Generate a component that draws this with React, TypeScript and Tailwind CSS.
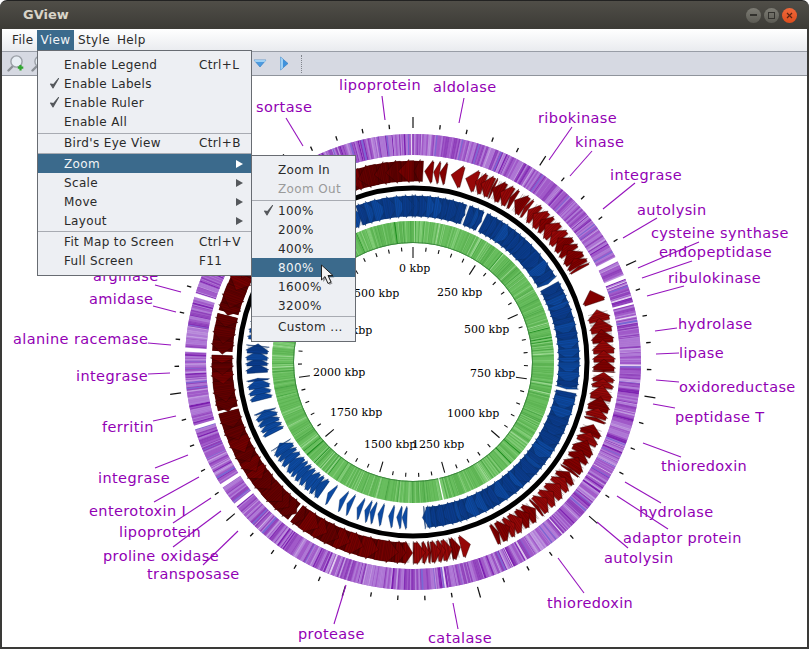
import { Fragment } from 'react';

const CX = 413;
const CY = 362;

function rng(seed: number) {
  let s = seed;
  return () => {
    s = (s + 0x6d2b79f5) | 0;
    let t = Math.imul(s ^ (s >>> 15), 1 | s);
    t = (t + Math.imul(t ^ (t >>> 7), 61 | t)) ^ t;
    return ((t ^ (t >>> 14)) >>> 0) / 4294967296;
  };
}

function pt(r: number, deg: number) {
  const a = (deg * Math.PI) / 180;
  return `${(CX + r * Math.sin(a)).toFixed(2)} ${(CY - r * Math.cos(a)).toFixed(2)}`;
}

function wedge(r0: number, r1: number, a0: number, a1: number) {
  const large = a1 - a0 > 180 ? 1 : 0;
  return `M${pt(r0, a0)}L${pt(r1, a0)}A${r1} ${r1} 0 ${large} 1 ${pt(r1, a1)}L${pt(r0, a1)}A${r0} ${r0} 0 ${large} 0 ${pt(r0, a0)}Z`;
}

function pick(r: () => number, colors: [string, number][]) {
  let v = r();
  for (const [c, w] of colors) {
    v -= w;
    if (v <= 0) return c;
  }
  return colors[0][0];
}

const PURPLE_GAPS: [number, number][] = [
  [62.6, 63.8], [67.6, 68.6], [74.8, 75.3], [230.6, 231.6], [236.6, 237.6], [252.8, 253.8], [272.6, 273.6], [286.6, 287.6],
];

function PurpleRing() {
  const r = rng(11);
  const stripes: { d: string; c: string; o: number }[] = [];
  let a = 0;
  while (a < 360) {
    const w = 0.12 + r() * 0.4;
    const c = pick(r, [
      ['#b27fd8', 0.3], ['#a058c8', 0.27], ['#8c3cb8', 0.18], ['#c4a0e2', 0.12], ['#7a1cae', 0.07],
      ['#7468d4', 0.045], ['#eee4f6', 0.015], ['#4a2bb8', 0.01],
    ]);
    stripes.push({ d: wedge(207, 228, a, a + w), c, o: 0.7 + r() * 0.3 });
    a += w;
  }
  return (
    <g>
      <circle cx={CX} cy={CY} r={217.5} fill="none" stroke="#a563cc" strokeWidth={21} />
      {stripes.map((s, i) => (
        <path key={i} d={s.d} fill={s.c} opacity={s.o} />
      ))}
      {PURPLE_GAPS.map(([g0, g1], i) => (
        <path key={i} d={wedge(204, 231, g0, g1)} fill="#fff" />
      ))}
    </g>
  );
}

function GreenRing() {
  const r = rng(23);
  const stripes: { d: string; c: string; o: number }[] = [];
  let a = 0;
  while (a < 360) {
    const w = 0.15 + r() * 0.45;
    const c = pick(r, [
      ['#6abf60', 0.36], ['#5cb352', 0.28], ['#86cf7c', 0.22], ['#4aa545', 0.08], ['#a3dc9a', 0.04], ['#17891a', 0.02],
    ]);
    stripes.push({ d: wedge(119, 141, a, a + w), c, o: 0.7 + r() * 0.3 });
    a += w;
  }
  return (
    <g>
      <circle cx={CX} cy={CY} r={130} fill="none" stroke="#66ba5c" strokeWidth={22} />
      {stripes.map((s, i) => (
        <path key={i} d={s.d} fill={s.c} opacity={s.o} />
      ))}
      <circle cx={CX} cy={CY} r={119.5} fill="none" stroke="#2f7a34" strokeWidth={1} opacity={0.8} />
      <path d={wedge(117, 143, 167.3, 167.8)} fill="#fff" />
    </g>
  );
}

type Gene = { a0: number; a1: number; over?: number };

// splits a range into genes of random length, heads lap over the next gene a bit
function split(ranges: [number, number][], seed: number, min: number, max: number) {
  const r = rng(seed);
  const out: Gene[] = [];
  for (const [s, e] of ranges) {
    let a = s;
    while (a < e) {
      const l = Math.min(min + r() * (max - min), e - a);
      out.push({ a0: a, a1: a + l, over: a + l >= e ? 0 : 0.9 });
      a += l;
    }
  }
  return out;
}

function arrow(g: Gene, r0: number, r1: number, dir: number) {
  const len = g.a1 - g.a0;
  const head = g.over === undefined ? len * 0.85 : Math.min(len * 0.65, 2.4);
  const mid = (r0 + r1) / 2;
  const over = g.over ?? 0;
  const back = dir > 0 ? g.a0 : g.a1;
  const neck = dir > 0 ? g.a1 - head : g.a0 + head;
  const tip = dir > 0 ? g.a1 + over : g.a0 - over;
  const steps = Math.max(1, Math.ceil(Math.abs(neck - back) / 1.5));
  const outer: string[] = [];
  const inner: string[] = [];
  for (let i = 0; i <= steps; i++) {
    const a = back + ((neck - back) * i) / steps;
    outer.push(pt(r1 - 0.8, a));
    inner.unshift(pt(r0 + 0.8, a));
  }
  return `M${outer.join('L')}L${pt(r1 + 0.6, neck)}L${pt(mid, tip)}L${pt(r0 - 0.6, neck)}L${inner.join('L')}Z`;
}

function GeneRing({ genes, solid, r0, r1, dir, fill, line, seed }: { genes: Gene[]; solid: [number, number, string][]; r0: number; r1: number; dir: number; fill: (a: number, v: number) => string; line: string; seed: number }) {
  const r = rng(seed);
  return (
    <g>
      {solid.map(([a0, a1, c], i) => (
        <path key={i} d={wedge(r0 + 0.8, r1 - 0.8, a0, a1)} fill={c} />
      ))}
      {genes.map((g, i) => {
        const hatch: string[] = [];
        if (g.over !== undefined) {
          for (let a = g.a0 + 0.2; a < g.a1 - 0.2; a += 0.3 + r() * 0.5) {
            hatch.push(`M${pt(r0 + 1, a)}L${pt(r1 - 1, a)}`);
          }
        }
        return (
          <Fragment key={i}>
            <path d={arrow(g, r0, r1, dir)} fill={fill(g.a0, r())} stroke={line} strokeWidth={0.4} />
            <path d={hatch.join('')} stroke={line} strokeWidth={0.5} opacity={0.55} fill="none" />
          </Fragment>
        );
      })}
    </g>
  );
}

const RED_GENES: Gene[] = [
  { a0: 162.5, a1: 165.5 },
  ...split([[166.5, 168.5], [169, 175.5], [176, 180]], 6, 1.2, 2.6),
  ...split([[181, 217.5], [218.4, 255], [255.8, 272], [273.2, 284], [285, 363]], 7, 2, 6),
  { a0: 3.5, a1: 6 }, { a0: 6.2, a1: 8 }, { a0: 8, a1: 10 }, { a0: 11.5, a1: 15 }, { a0: 16, a1: 19.5 },
  ...split([[20, 25], [25.5, 32], [33, 37]], 8, 1.6, 3),
  ...split([[38, 61]], 9, 1.6, 3.2),
  { a0: 68, a1: 72 },
  ...split([[75, 93], [94, 108], [110, 125], [126, 140], [141, 155]], 10, 1.8, 3.6),
];

const BLUE_GENES: Gene[] = [
  ...split([[0, 19.5], [20, 26], [26.6, 60], [61, 100], [101, 176]], 15, 1.5, 4.5),
  ...[184, 186, 189, 193, 196, 198, 201, 205, 208, 213].map((a) => ({ a0: a - 1.8, a1: a })),
  ...split([[215, 238], [243, 252], [256, 264], [266, 276], [278, 290]], 16, 1.6, 3),
  ...split([[300, 360]], 17, 2, 5),
];

const TICK_TEXT: [string, number, number][] = [
  ['0 kbp', 399, 272], ['250 kbp', 437, 296], ['500 kbp', 464, 333], ['750 kbp', 470, 377], ['1000 kbp', 447, 417],
  ['1250 kbp', 412, 448], ['1500 kbp', 364, 448], ['1750 kbp', 330, 416], ['2000 kbp', 313, 376], ['2250 kbp', 320, 334], ['2500 kbp', 347, 297],
];

const LABELS: { t: string; x: number; y: number; l: [number, number, number, number] }[] = [
  { t: 'sortase', x: 256, y: 112, l: [286, 118, 303, 146] },
  { t: 'lipoprotein', x: 339, y: 90, l: [382, 96, 385, 120] },
  { t: 'aldolase', x: 433, y: 92, l: [464, 98, 459, 123] },
  { t: 'ribokinase', x: 538, y: 123, l: [572, 127, 549, 160] },
  { t: 'kinase', x: 575, y: 147, l: [592, 151, 570, 176] },
  { t: 'integrase', x: 610, y: 180, l: [635, 183, 603, 209] },
  { t: 'autolysin', x: 637, y: 215, l: [657, 218, 623, 238] },
  { t: 'cysteine synthase', x: 651, y: 238, l: [699, 242, 638, 268] },
  { t: 'endopeptidase', x: 659, y: 257, l: [692, 261, 642, 278] },
  { t: 'ribulokinase', x: 668, y: 283, l: [684, 286, 647, 296] },
  { t: 'hydrolase', x: 678, y: 329, l: [677, 328, 655, 331] },
  { t: 'lipase', x: 679, y: 358, l: [679, 353, 656, 354] },
  { t: 'oxidoreductase', x: 679, y: 392, l: [679, 382, 656, 380] },
  { t: 'peptidase T', x: 675, y: 422, l: [675, 408, 653, 404] },
  { t: 'thioredoxin', x: 661, y: 471, l: [681, 457, 643, 443] },
  { t: 'hydrolase', x: 639, y: 517, l: [661, 503, 625, 482] },
  { t: 'adaptor protein', x: 623, y: 543, l: [668, 529, 617, 496] },
  { t: 'autolysin', x: 604, y: 563, l: [628, 548, 597, 522] },
  { t: 'thioredoxin', x: 547, y: 608, l: [584, 593, 558, 558] },
  { t: 'catalase', x: 428, y: 643, l: [458, 629, 453, 603] },
  { t: 'protease', x: 298, y: 639, l: [334, 624, 346, 585] },
  { t: 'transposase', x: 147, y: 579, l: [203, 565, 238, 531] },
  { t: 'proline oxidase', x: 103, y: 561, l: [173, 547, 221, 511] },
  { t: 'lipoprotein', x: 119, y: 537, l: [173, 523, 211, 498] },
  { t: 'enterotoxin I', x: 89, y: 516, l: [154, 502, 199, 477] },
  { t: 'integrase', x: 98, y: 483, l: [155, 468, 188, 455] },
  { t: 'ferritin', x: 102, y: 432, l: [153, 421, 176, 416] },
  { t: 'integrase', x: 76, y: 381, l: [148, 374, 170, 373] },
  { t: 'alanine racemase', x: 13, y: 344, l: [148, 343, 171, 345] },
  { t: 'amidase', x: 89, y: 304, l: [153, 306, 176, 312] },
  { t: 'arginase', x: 93, y: 281, l: [155, 285, 181, 292] },
];

function Ticks() {
  const ticks = [];
  for (let k = 0; k < 55; k++) {
    const a = k * 6.56;
    const major = k % 5 === 0;
    ticks.push(
      <Fragment key={k}>
        <path d={`M${pt(234, a)}L${pt(major ? 245 : 238.5, a)}`} stroke="#111" strokeWidth={major ? 1.2 : 1.3} />
        <path d={`M${pt(115, a)}L${pt(major ? 104 : 111, a)}`} stroke="#111" strokeWidth={1.1} />
      </Fragment>
    );
  }
  return <g>{ticks}</g>;
}

function GenomeMap() {
  return (
    <svg className="absolute left-0 top-0" width={809} height={649} viewBox="0 0 809 649">
      <Ticks />
      <PurpleRing />
      <GeneRing
        genes={RED_GENES}
        solid={[[182, 217.5, '#5c0000'], [218.4, 255, '#5c0000'], [255.8, 272, '#5c0000'], [273.2, 284, '#5c0000'], [285, 362, '#5c0000']]}
        r0={180}
        r1={202}
        dir={-1}
        seed={31}
        line="#2c0000"
        fill={(a, v) => (a > 181 || a < 3 ? (v > 0.5 ? '#760000' : '#640000') : v > 0.5 ? '#960808' : '#820000')}
      />
      <circle cx={CX} cy={CY} r={174} fill="none" stroke="#000" strokeWidth={5} />
      <GeneRing
        genes={BLUE_GENES}
        solid={[[0, 19, '#0a3a86'], [20.5, 25.5, '#0a3a86'], [27, 59, '#0a3a86'], [62, 99, '#0a3a86'], [102, 175, '#0a3a86'], [340, 360, '#0a3a86']]}
        r0={145}
        r1={167}
        dir={1}
        seed={37}
        line="#0a2a5c"
        fill={(a, v) => (a > 178 && a < 250 ? '#0d4ba3' : v > 0.5 ? '#0d49a2' : '#0a3c8e')}
      />
      <GreenRing />
      {TICK_TEXT.map(([t, x, y]) => (
        <text key={t} x={x} y={y} className="font-['DejaVu_Serif',serif] text-[11px] fill-black">
          {t}
        </text>
      ))}
      {LABELS.map((b, i) => (
        <Fragment key={i}>
          <line x1={b.l[0]} y1={b.l[1]} x2={b.l[2]} y2={b.l[3]} stroke="#9612bd" strokeWidth={1.1} />
          <text x={b.x} y={b.y} className="font-['DejaVu_Sans',sans-serif] text-[14.5px] tracking-[0.4px] fill-[#9200b4]">
            {b.t}
          </text>
        </Fragment>
      ))}
    </svg>
  );
}

function Check() {
  return (
    <svg width="11" height="12" viewBox="0 0 11 12" className="absolute left-[11px] top-[3px]">
      <path d="M1.5 7 L4 11 L9.5 1.5 L4.5 7.6 Z" fill="#55585c" stroke="#55585c" strokeWidth="1.1" strokeLinejoin="round" />
    </svg>
  );
}

type Item = { label: string; key?: string; checked?: boolean; arrow?: boolean; active?: boolean; disabled?: boolean };

function MenuRow({ item }: { item: Item }) {
  const tone = item.active ? 'bg-[#3b6a8c] text-[#f2f4f6]' : item.disabled ? 'text-[#9a9a9a]' : 'text-[#2a2a2a]';
  return (
    <div className={`relative flex h-[19px] items-center whitespace-nowrap pl-[26px] ${tone}`}>
      {item.checked && <Check />}
      <span>{item.label}</span>
      {item.key && <span className="absolute left-[161px]">{item.key}</span>}
      {item.arrow && <span className={`absolute left-[198px] h-0 w-0 border-y-[4.5px] border-l-[7px] border-y-transparent ${item.active ? 'border-l-white' : 'border-l-[#55585c]'}`} />}
    </div>
  );
}

function Sep({ top = 'mt-px' }: { top?: string }) {
  return <div className={`h-px bg-[#a8abb2] ${top}`} />;
}

function ViewMenu() {
  return (
    <div className="absolute left-[37px] top-[50px] w-[215px] border border-[#686c72] bg-[#edeff3] pb-[5px] pt-[4px] text-[12px] tracking-[0.35px]">
      {[{ label: 'Enable Legend', key: 'Ctrl+L' }, { label: 'Enable Labels', checked: true }, { label: 'Enable Ruler', checked: true }, { label: 'Enable All' }].map((i) => (
        <MenuRow key={i.label} item={i} />
      ))}
      <Sep top="mt-[2px] mb-[-1px]" />
      <MenuRow item={{ label: "Bird's Eye View", key: 'Ctrl+B' }} />
      <Sep />
      {[{ label: 'Zoom', arrow: true, active: true }, { label: 'Scale', arrow: true }, { label: 'Move', arrow: true }, { label: 'Layout', arrow: true }].map((i) => (
        <MenuRow key={i.label} item={i} />
      ))}
      <Sep />
      <MenuRow item={{ label: 'Fit Map to Screen', key: 'Ctrl+V' }} />
      <MenuRow item={{ label: 'Full Screen', key: 'F11' }} />
    </div>
  );
}

function ZoomMenu() {
  return (
    <div className="absolute left-[251px] top-[155px] w-[105px] border border-[#686c72] bg-[#edeff3] pb-[5px] pt-[4px] text-[12px] tracking-[0.35px]">
      <MenuRow item={{ label: 'Zoom In' }} />
      <MenuRow item={{ label: 'Zoom Out', disabled: true }} />
      <Sep top="mt-[2px]" />
      {[{ label: '100%', checked: true }, { label: '200%' }, { label: '400%' }, { label: '800%', active: true }, { label: '1600%' }, { label: '3200%' }].map((i) => (
        <MenuRow key={i.label} item={i} />
      ))}
      <Sep />
      <MenuRow item={{ label: 'Custom ...' }} />
    </div>
  );
}

function Magnifier({ plus }: { plus?: boolean }) {
  return (
    <svg width="18" height="19" viewBox="0 0 18 19">
      <path d="M6.5 11.5 L1.5 16.5" stroke="#8b9096" strokeWidth="2.4" strokeLinecap="round" />
      <circle cx="9.5" cy="7.5" r="5.6" fill="#e8eef4" stroke="#9a9fa6" strokeWidth="1.4" />
      {plus && <path d="M13.5 11v5.5M10.8 13.7h5.5" stroke="#2fa52f" strokeWidth="2.2" />}
    </svg>
  );
}

function Cursor() {
  return (
    <svg className="absolute left-[320px] top-[264px]" width="18" height="24" viewBox="0 0 18 24">
      <path d="M3 3 L3 18 L6.5 14.5 L9.5 21 L12.5 19.5 L9.5 13.5 L14.5 13.5 Z" fill="#000" opacity="0.35" />
      <path d="M1.5 1 L1.5 16 L5 12.6 L8 19.5 L11 18 L8 11.5 L13 11.5 Z" fill="#f4f4f4" stroke="#222" strokeWidth="1" strokeLinejoin="round" />
    </svg>
  );
}

function WinButton({ children, close }: { children: React.ReactNode; close?: boolean }) {
  return (
    <span className={`flex h-[15px] w-[15px] items-center justify-center rounded-full ${close ? 'bg-gradient-to-b from-[#f0683a] to-[#dd4d1c]' : 'bg-gradient-to-b from-[#7d7c74] to-[#5c5b54]'}`}>
      {children}
    </span>
  );
}

export default function App() {
  return (
    <div className="relative flex h-[649px] w-[809px] flex-col overflow-hidden bg-white font-['DejaVu_Sans',sans-serif]">
      <div className="flex h-[29px] items-center justify-between rounded-t-[7px] border-t border-[#222] bg-gradient-to-b from-[#504e48] to-[#3c3b36] pl-[23px] pr-[12px]">
        <span className="text-[13px] font-bold text-[#d8d4c8]">GView</span>
        <div className="flex gap-[3px]">
          <WinButton><span className="h-[1.5px] w-[7px] bg-[#33322e]" /></WinButton>
          <WinButton><span className="h-[7px] w-[7px] border border-[#33322e]" /></WinButton>
          <WinButton close>
            <svg width="7" height="7" viewBox="0 0 7 7"><path d="M1 1l5 5M6 1l-5 5" stroke="#5a2412" strokeWidth="1.2" /></svg>
          </WinButton>
        </div>
      </div>
      <div className="flex min-h-0 flex-1 flex-col border-x-2 border-b-2 border-[#3a3a38]">
        <div className="flex h-[23px] items-center border-b border-[#989da6] bg-gradient-to-b from-white to-[#e9ebef] pl-[10px] text-[12px] tracking-[0.35px] text-[#2a2a2a]">
          <span className="w-[25px]">File</span>
          <span className="flex h-[20px] w-[37px] items-center justify-center bg-[#3b6a8c] text-[#f2f4f6]">View</span>
          <span className="w-[43px] pl-[4px]">Style</span>
          <span>Help</span>
        </div>
        <div className="flex h-[24px] items-center border-b border-[#8f949c] bg-[#d6d9e2] pl-[5px]">
          <Magnifier plus />
          <span className="ml-[6px]"><Magnifier /></span>
          <svg className="ml-[204px]" width="14" height="10" viewBox="0 0 14 10">
            <path d="M1 1 H13 L7 8 Z" fill="#4d9be0" stroke="#2e78c0" strokeWidth="0.6" />
            <path d="M1 1 H13 L11.5 3 H2.5 Z" fill="#9fd0f4" />
          </svg>
          <svg className="ml-[12px]" width="10" height="15" viewBox="0 0 10 15">
            <path d="M1.5 1 L9 7.5 L1.5 14 Z" fill="#3f92dc" stroke="#2e78c0" strokeWidth="0.6" />
            <path d="M1.5 1 L4 3.2 V11.8 L1.5 14 Z" fill="#9fd0f4" />
          </svg>
          <span className="ml-[12px] h-[18px] border-l border-dotted border-[#80848c]" />
        </div>
        <div className="flex-1 bg-white" />
      </div>
      <div className="pointer-events-none absolute inset-0 overflow-hidden">
        <div className="absolute bottom-[2px] left-[2px] right-[2px] top-[76px] overflow-hidden">
          <div className="absolute left-[-2px] top-[-76px]">
            <GenomeMap />
          </div>
        </div>
      </div>
      <ViewMenu />
      <ZoomMenu />
      <Cursor />
    </div>
  );
}
